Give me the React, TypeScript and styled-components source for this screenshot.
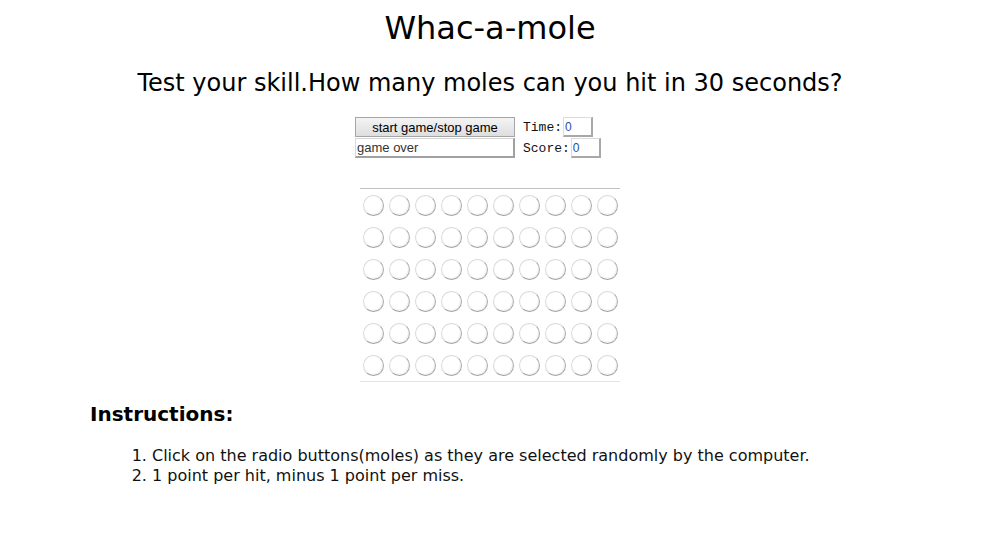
import React from "react";
import styled, { createGlobalStyle } from "styled-components";

const GlobalStyle = createGlobalStyle`
  html, body { margin: 0; padding: 0; background: #fff; }
  body {
    font-family: "DejaVu Sans", Verdana, sans-serif;
    color: #000;
  }
`;

const Page = styled.div`
  width: 980px;
  display: flex;
  flex-direction: column;
  align-items: center;
`;

const Title = styled.h1`
  margin: 8px 0 0;
  font-size: 32px;
  line-height: 40px;
  font-weight: normal;
`;

const Subtitle = styled.h2`
  margin: 20px 0 0;
  font-size: 24px;
  line-height: 30px;
  font-weight: normal;
`;

const Controls = styled.div`
  margin-top: 19px;
  width: 270px;
  display: grid;
  grid-template-columns: 160px auto;
  column-gap: 8px;
  row-gap: 1px;
  align-items: center;
`;

const StartButton = styled.button`
  width: 160px;
  height: 20px;
  padding: 0;
  font-family: "Liberation Sans", Arial, sans-serif;
  font-size: 13px;
  color: #000;
  border: 1px solid #a6a6a6;
  border-radius: 0;
  background: linear-gradient(#f4f4f4, #dedede);
`;

const StatusInput = styled.input`
  box-sizing: border-box;
  width: 160px;
  height: 20px;
  margin: 0;
  padding: 0 1px;
  font-family: "Liberation Sans", Arial, sans-serif;
  font-size: 13px;
  color: #333;
  border-style: solid;
  border-width: 1px 2px 2px 1px;
  border-color: #d8d8d8 #a0a0a0 #a0a0a0 #d8d8d8;
  outline: none;
`;

const Field = styled.div`
  display: flex;
  align-items: center;
  font-family: "Liberation Mono", "DejaVu Sans Mono", monospace;
  font-size: 13px;
  font-weight: normal;
  color: #111;
`;

const SmallInput = styled.input`
  box-sizing: border-box;
  width: 30px;
  height: 20px;
  margin: 0 0 0 1px;
  padding: 0 1px;
  font-family: "Liberation Sans", Arial, sans-serif;
  font-size: 12px;
  color: #2a4ea0;
  border-style: solid;
  border-width: 1px 2px 2px 1px;
  border-color: #dcdcdc #a8a8a8 #a8a8a8 #dcdcdc;
  outline: none;
`;

const Board = styled.div`
  margin-top: 30px;
  width: 260px;
  display: grid;
  grid-template-columns: repeat(10, 26px);
  grid-auto-rows: 32px;
  border-top: 1px solid #c0c0c0;
  border-bottom: 1px solid #e4e4e4;
`;

const Cell = styled.div`
  display: flex;
  align-items: center;
  justify-content: center;
`;

const Mole = styled.input.attrs({ type: "radio" })`
  appearance: none;
  box-sizing: border-box;
  width: 21px;
  height: 21px;
  margin: 0;
  border-radius: 50%;
  border: 1px solid #d9d9d9;
  border-right-color: #a9a9a9;
  border-bottom-color: #a0a0a0;
  background: #fff;
  box-shadow: inset -1px -1px 1px rgba(0, 0, 0, 0.06);
`;

const Instructions = styled.section`
  align-self: stretch;
  margin-top: 20px;
  padding-left: 90px;
`;

const InstructionsTitle = styled.h3`
  margin: 0;
  font-size: 20px;
  line-height: 24px;
  font-weight: bold;
`;

const Steps = styled.ol`
  margin: 20px 0 0;
  padding-left: 62px;
  font-size: 16px;
  line-height: 20px;
  color: #111;
`;

export default function App() {
  const rows = Array.from({ length: 6 });
  const cols = Array.from({ length: 10 });
  return (
    <>
      <GlobalStyle />
      <Page>
        <Title>Whac-a-mole</Title>
        <Subtitle>Test your skill.How many moles can you hit in 30 seconds?</Subtitle>
        <Controls>
          <StartButton>start game/stop game</StartButton>
          <Field>
            Time:<SmallInput readOnly value="0" />
          </Field>
          <StatusInput readOnly value="game over" />
          <Field>
            Score:<SmallInput readOnly value="0" />
          </Field>
        </Controls>
        <Board>
          {rows.map((_, r) =>
            cols.map((_, c) => (
              <Cell key={`${r}-${c}`}>
                <Mole name={`mole-${r}-${c}`} readOnly />
              </Cell>
            ))
          )}
        </Board>
        <Instructions>
          <InstructionsTitle>Instructions:</InstructionsTitle>
          <Steps>
            <li>Click on the radio buttons(moles) as they are selected randomly by the computer.</li>
            <li>1 point per hit, minus 1 point per miss.</li>
          </Steps>
        </Instructions>
      </Page>
    </>
  );
}
